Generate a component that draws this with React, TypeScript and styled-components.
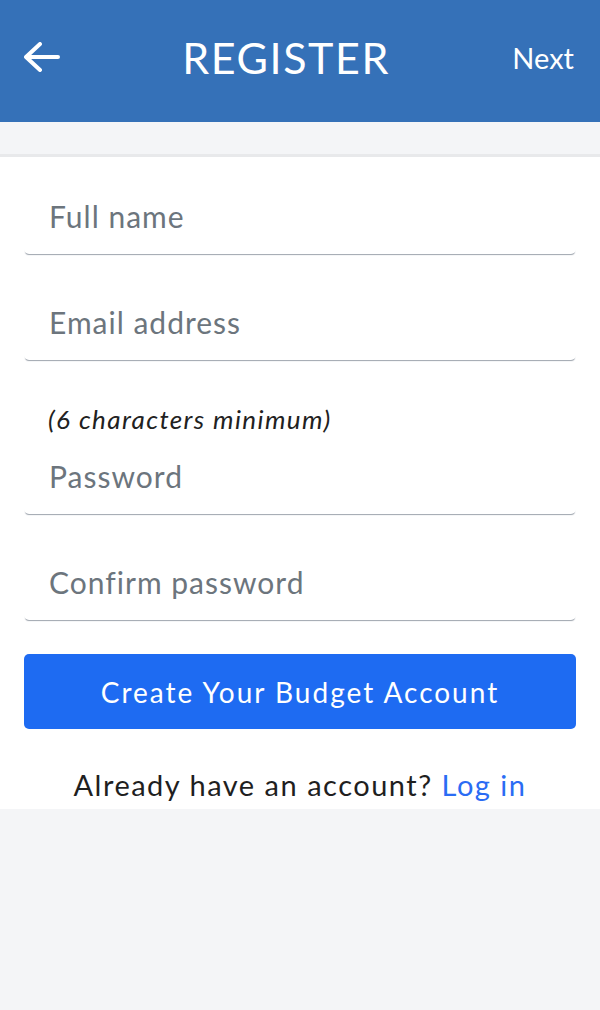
import React from "react";
import styled, { createGlobalStyle } from "styled-components";

const GlobalStyle = createGlobalStyle`
  html, body {
    margin: 0;
    padding: 0;
    background: #f4f5f7;
    font-family: Lato, "Open Sans", Arial, sans-serif;
  }
  * {
    box-sizing: border-box;
  }
`;

const Page = styled.div`
  width: 600px;
  min-height: 1010px;
  background: #f4f5f7;
`;

const Header = styled.header`
  height: 122px;
  background: #3571b8;
  display: flex;
  align-items: center;
  padding: 0 26px 8px 24px;
  color: #fff;
`;

const BackButton = styled.button`
  width: 36px;
  height: 30px;
  padding: 0;
  border: 0;
  background: none;
  display: flex;
  cursor: pointer;
`;

const Title = styled.h1`
  flex: 1;
  margin: 0;
  text-align: center;
  font-size: 43px;
  font-weight: 400;
  letter-spacing: 1.6px;
  line-height: 1;
`;

const NextLink = styled.a`
  font-size: 29px;
  line-height: 1;
  color: #fff;
  text-decoration: none;
`;

const Spacer = styled.div`
  height: 32px;
`;

const Panel = styled.main`
  background: #fff;
  border-top: 3px solid #e8e9eb;
  padding: 21px 24px 4px;
  display: flex;
  flex-direction: column;
`;

const Field = styled.input<{ $last?: boolean }>`
  height: 76px;
  width: 100%;
  border: 0;
  border-radius: 0 0 5px 5px;
  box-shadow: 0 2px 1px -1px rgba(40, 55, 75, 0.45);
  padding: 0 25px;
  margin-bottom: ${(p) => (p.$last ? 0 : 30)}px;
  font-family: inherit;
  font-size: 30px;
  letter-spacing: 1px;
  color: #212529;
  background: #fff;
  outline: none;

  &::placeholder {
    color: #6c757d;
  }
`;

const Hint = styled.div`
  font-size: 26px;
  font-style: italic;
  letter-spacing: 1.4px;
  color: #212121;
  line-height: 38px;
  padding: 10px 0 0 24px;
`;

const SubmitButton = styled.button`
  margin-top: 34px;
  height: 75px;
  border: 0;
  border-radius: 5px;
  background: #1e6bf2;
  color: #fff;
  font-family: inherit;
  font-size: 28px;
  letter-spacing: 2px;
  cursor: pointer;
`;

const Footer = styled.p`
  margin: 36px 0 0;
  line-height: 40px;
  text-align: center;
  font-size: 29px;
  letter-spacing: 1.5px;
  color: #1f1f1f;
`;

const LoginLink = styled.a`
  color: #2a6cf4;
  text-decoration: none;
`;

function BackArrow() {
  return (
    <svg width="36" height="30" viewBox="0 0 36 30" fill="none">
      <path
        d="M2 15 H34 M16 2 L2 15 L16 28"
        stroke="#fff"
        strokeWidth="4"
        strokeLinecap="round"
        strokeLinejoin="round"
      />
    </svg>
  );
}

export default function App() {
  return (
    <Page>
      <GlobalStyle />
      <Header>
        <BackButton aria-label="Back">
          <BackArrow />
        </BackButton>
        <Title>REGISTER</Title>
        <NextLink href="#">Next</NextLink>
      </Header>
      <Spacer />
      <Panel>
        <Field type="text" placeholder="Full name" />
        <Field type="email" placeholder="Email address" />
        <Hint>(6 characters minimum)</Hint>
        <Field type="password" placeholder="Password" />
        <Field type="password" placeholder="Confirm password" $last />
        <SubmitButton>Create Your Budget Account</SubmitButton>
        <Footer>
          Already have an account? <LoginLink href="#">Log in</LoginLink>
        </Footer>
      </Panel>
    </Page>
  );
}
